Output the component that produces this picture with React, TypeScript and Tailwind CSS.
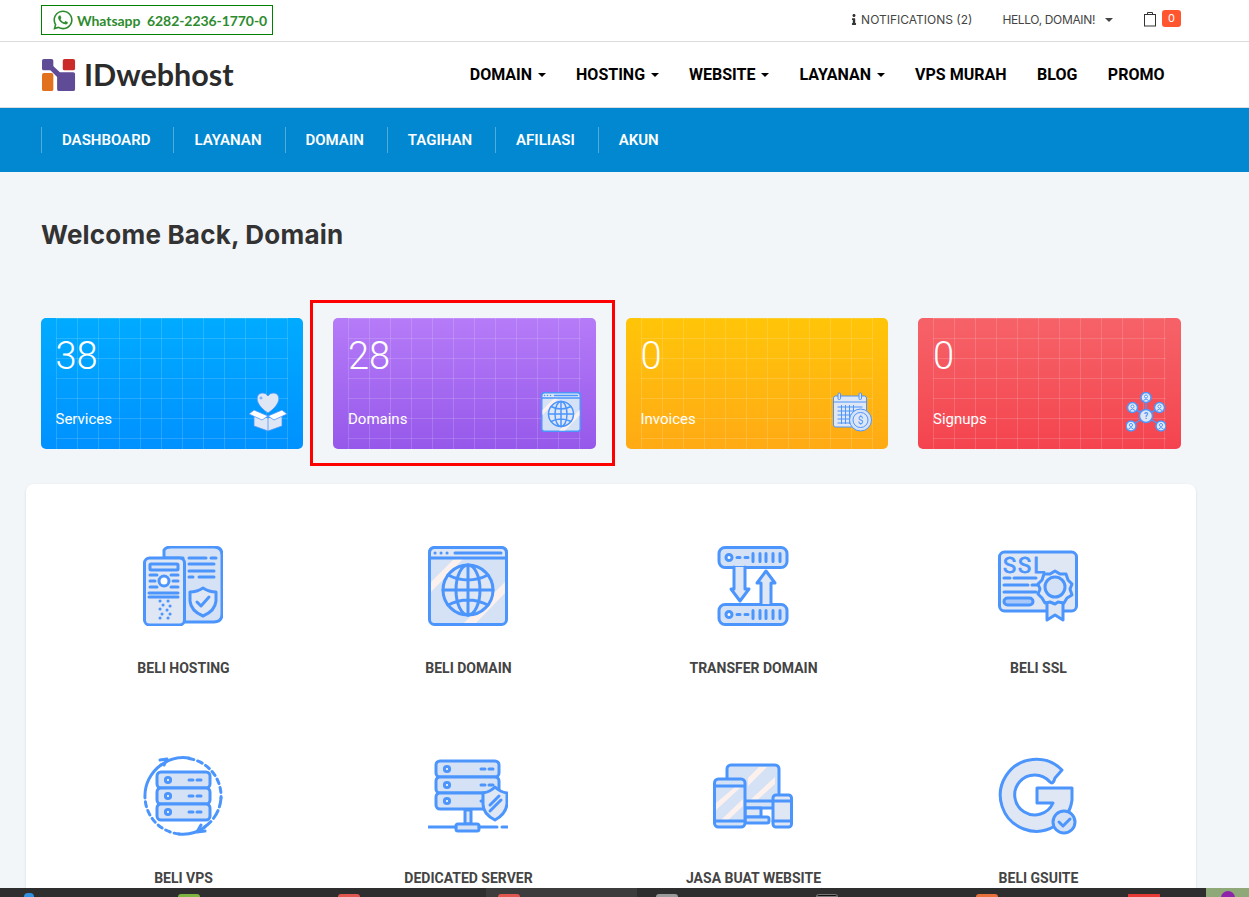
import { FaWhatsapp, FaInfo } from 'react-icons/fa';

const B = '#4b95fd';
const L1 = '#d5e2f5';
const L2 = '#e0e7f4';
const P = '#fdf1ee';

function Caret({ nav }: { nav?: boolean }) {
  return (
    <span
      className={`inline-block w-0 h-0 border-x-4 border-t-4 border-x-transparent border-t-current align-middle ${nav ? 'ml-[5.5px]' : 'ml-[10px]'}`}
    />
  );
}

function Ic({ children, className }: { children: React.ReactNode; className?: string }) {
  return (
    <svg viewBox="0 0 80 80" className={className} fill="none" stroke={B} strokeWidth="3" strokeLinecap="round" strokeLinejoin="round">
      {children}
    </svg>
  );
}

function HostingIcon({ className }: { className?: string }) {
  return (
    <Ic className={className}>
      <path d="M21 4 Q23 1 28 1 H71 Q79 1 79 9 V68 Q79 76 71 76 H40 V12 H21 Z" fill={L1} />
      <rect x="1.5" y="12" width="40" height="67" rx="5" fill={L2} />
      <rect x="7" y="18" width="28" height="6" rx="1" fill={L1} />
      <circle cx="21" cy="35" r="5" fill="#fff" />
      <path d="M7 29h7M28 29h7M7 35h5M30 35h5M7 41h7M28 41h7M6 47h29M6 51h29" />
      <path d="M46 12h17M68 12h5M46 18h25M46 25h25M46 31h4M56 31h15" />
      <path d="M60 42 Q66 46 73 46 V55 Q72 65 60 70 Q48 65 47 55 V46 Q54 46 60 42Z" fill={L2} />
      <path d="M54 56l4 4 8-9" />
      <path d="M17 55h.1M25 55h.1M20 59h.1M27 60h.1M17 63h.1M24 64h.1M19 68h.1M27 68h.1M17 72h.1M25 72h.1" />
    </Ic>
  );
}

function GlobeIcon({ className }: { className?: string }) {
  return (
    <Ic className={className}>
      <rect x="1.5" y="1.5" width="77" height="77" rx="5" fill={L1} />
      <path d="M3 36 L27 12 H36 L3 46Z M36 77 L77 36 V47 L48 77Z" fill={P} stroke="none" />
      <path d="M1.5 12 V7 Q1.5 1.5 7 1.5 H73 Q78.5 1.5 78.5 7 V12Z" fill={L2} />
      <path d="M7 7h.1M13 7h.1M19 7h.1M27 7h46" />
      <circle cx="40" cy="44" r="25" fill={L2} />
      <ellipse cx="40" cy="44" rx="12" ry="25" />
      <path d="M40 19v50M15 44h50M20 29 Q40 39 60 29M20 59 Q40 49 60 59" />
    </Ic>
  );
}

function TransferIcon({ className }: { className?: string }) {
  const server = (y: number) => (
    <g>
      <rect x="6" y={y} width="68" height="20" rx="6" fill={L1} />
      <circle cx="16" cy={y + 10} r="3" fill="#fff" />
      <path d={`M24 ${y + 10}h3M32 ${y + 10}h3M40 ${y + 6}v8M47 ${y + 6}v8M53 ${y + 6}v8M60 ${y + 6}v8M67 ${y + 6}v8`} />
    </g>
  );
  return (
    <Ic className={className}>
      {server(1.5)}
      {server(58.5)}
      <path d="M21 21 V43 H18 L27 55 L36 43 H32 V21" fill={L2} />
      <path d="M48 58 V37 H44 L53 25 L62 37 H58 V58" fill={L2} />
    </Ic>
  );
}

function SslIcon({ className }: { className?: string }) {
  return (
    <Ic className={className}>
      <rect x="1.5" y="6" width="77" height="59" rx="5" fill={L2} />
      <text x="5" y="27" fontSize="22" fontFamily="Roboto, sans-serif" fill={B} stroke={B} strokeWidth="0.8" letterSpacing="2">SSL</text>
      <path d="M6 32h6M16 32h22M6 39h24M34 39h5M6 46h32" />
      <rect x="6" y="52" width="29" height="7" rx="3.5" fill="#a9c8f8" />
      <path d="M49 55 V74 L57 69 L65 74 V55" fill={L2} />
      <path d="M57 25 L62 28 L68 28 L70 34 L74 38 L72 43 L74 49 L69 52 L66 57 L60 56 L57 58 L52 56 L47 57 L44 52 L40 48 L42 43 L40 38 L44 34 L46 28 L52 28Z" fill={L2} />
      <circle cx="57" cy="41" r="10" fill={L1} />
    </Ic>
  );
}

function VpsIcon({ className }: { className?: string }) {
  return (
    <Ic className={className}>
      <path d="M18 9 A38 38 0 0 1 46 2" />
      <path d="M46 2.5 A38 38 0 0 1 78 42" strokeDasharray="5 4" />
      <path d="M78 42 A38 38 0 0 1 60 72" strokeDasharray="9 4" />
      <path d="M62 71 A38 38 0 0 1 36 78" />
      <path d="M36 78 A38 38 0 0 1 2 42" strokeDasharray="5 4" />
      <path d="M2 42 A38 38 0 0 1 18 9" />
      <path d="M17 4 L24 3 L21 9M62 75 L54 76 L58 69" />
      {[16, 32, 48].map((y) => (
        <g key={y}>
          <rect x="14" y={y} width="53" height="16" rx="4" fill={L1} />
          <circle cx="25" cy={y + 8} r="2.6" fill="#fff" />
          <path d={`M46 ${y + 8}h4M54 ${y + 8}h4`} />
        </g>
      ))}
    </Ic>
  );
}

function DedicatedIcon({ className }: { className?: string }) {
  return (
    <Ic className={className}>
      {[5, 21, 37].map((y) => (
        <g key={y}>
          <rect x="8" y={y} width="63" height="16" rx="4" fill={L1} />
          <circle cx="19" cy={y + 8} r="2.6" fill="#fff" />
          <path d={`M53 ${y + 8}h4M61 ${y + 8}h4`} />
        </g>
      ))}
      <rect x="37" y="54" width="6" height="14" fill={L2} />
      <rect x="28" y="68" width="23" height="7" rx="2" fill={L1} />
      <path d="M1 71h27M51 71h18M74 71h5" />
      <path d="M67 31 Q72 36 79 37 V48 Q78 58 67 64 Q55 58 55 48 V37 Q62 36 67 31Z" fill={L2} />
      <path d="M62 49l9-9M62 55l11-11" />
    </Ic>
  );
}

function WebsiteIcon({ className }: { className?: string }) {
  return (
    <Ic className={className}>
      <rect x="14" y="9" width="52" height="43" rx="4" fill={L1} />
      <path d="M35 22 L46 11 H54 L35 30Z M35 46 L62 21 V28 L42 46Z" fill={P} stroke="none" />
      <path d="M32 45h34" />
      <rect x="32" y="52" width="16" height="9" fill={L2} />
      <rect x="32" y="61" width="24" height="6" rx="2" fill={L1} />
      <rect x="1.5" y="23" width="30.5" height="48" rx="4" fill={L1} />
      <path d="M3 47 L22 31 H28 L3 54Z M8 64 L30 43 V50 L15 64Z" fill={P} stroke="none" />
      <path d="M1.5 30h30M1.5 65h30" />
      <rect x="60" y="39" width="18.5" height="32" rx="3" fill={L2} />
      <path d="M60 45h18M60 65h18" />
    </Ic>
  );
}

function GsuiteIcon({ className }: { className?: string }) {
  return (
    <Ic className={className}>
      <path d="M64 14 A36 36 0 1 0 74 44 V32 H39 V47 H55 A20 20 0 1 1 52 26 Q55 29 57 22 Z" fill={L2} />
      <circle cx="66" cy="66" r="11" fill={L1} />
      <path d="M61 66l4 4 7-7" />
    </Ic>
  );
}

function BoxIcon({ className }: { className?: string }) {
  return (
    <svg viewBox="0 0 80 80" className={className} fill={L2} stroke={B} strokeWidth="1.6" strokeLinejoin="round">
      <path d="M40 42 C12 24 14 2 30 2 Q36 2 40 8 Q44 2 50 2 C66 2 68 24 40 42Z" />
      <path d="M12 42 V68 L40 78 L68 68 V42 L40 52Z" />
      <path d="M40 52 V78" />
      <path d="M12 36 L2 44 L28 56 L40 48 L52 56 L78 44 L68 36 L40 48Z" fill="#fff" />
      <circle cx="26" cy="12" r="2" fill={L1} />
    </svg>
  );
}

function CalendarIcon({ className }: { className?: string }) {
  return (
    <svg viewBox="0 0 80 80" className={className} fill={L2} stroke={B} strokeWidth="2">
      <rect x="1" y="8" width="66" height="62" rx="4" />
      <rect x="10" y="2" width="5" height="13" rx="2" fill={L1} />
      <rect x="52" y="2" width="5" height="13" rx="2" fill={L1} />
      <path d="M1 20h66M9 30h50M9 38h38M9 46h30M9 54h28M9 62h28M17 26v38M25 26v38M33 26v38M41 26v14" />
      <circle cx="55" cy="56" r="22" fill={L1} />
      <circle cx="55" cy="56" r="15" fill={L2} />
      <text x="55" y="63" fontSize="20" fontFamily="Roboto, sans-serif" textAnchor="middle" fill={B} stroke="none">$</text>
    </svg>
  );
}

function NetworkIcon({ className }: { className?: string }) {
  const nodes = [[40, 11], [13, 31], [67, 31], [10, 68], [70, 68]];
  return (
    <svg viewBox="0 0 80 80" className={className} fill={L2} stroke={B} strokeWidth="3">
      {nodes.map(([x, y]) => (
        <line key={`${x}-${y}`} x1="40" y1="48" x2={x} y2={y} />
      ))}
      {nodes.map(([x, y]) => (
        <g key={`n${x}-${y}`}>
          <circle cx={x} cy={y} r="10" />
          <circle cx={x} cy={y - 2} r="3" fill="#fff" strokeWidth="2" />
          <path d={`M${x - 5} ${y + 6} Q${x} ${y} ${x + 5} ${y + 6}`} strokeWidth="2" fill="none" />
        </g>
      ))}
      <circle cx="40" cy="48" r="13" />
      <text x="40" y="54" fontSize="17" fontFamily="Roboto, sans-serif" fontWeight="700" textAnchor="middle" fill={B} stroke="none">?</text>
    </svg>
  );
}

const mainNav = [
  { label: 'DOMAIN', caret: true },
  { label: 'HOSTING', caret: true },
  { label: 'WEBSITE', caret: true },
  { label: 'LAYANAN', caret: true },
  { label: 'VPS MURAH' },
  { label: 'BLOG' },
  { label: 'PROMO' },
];

const subNav = ['DASHBOARD', 'LAYANAN', 'DOMAIN', 'TAGIHAN', 'AFILIASI', 'AKUN'];

const cards = [
  { n: '38', label: 'Services', bg: 'bg-gradient-to-b from-[#00abff] to-[#0091ff]', Icon: BoxIcon },
  { n: '28', label: 'Domains', bg: 'bg-gradient-to-b from-[#b57bf8] to-[#9658ea]', Icon: GlobeIcon },
  { n: '0', label: 'Invoices', bg: 'bg-gradient-to-b from-[#ffc508] to-[#ffaa14]', Icon: CalendarIcon },
  { n: '0', label: 'Signups', bg: 'bg-gradient-to-b from-[#f66268] to-[#f4434f]', Icon: NetworkIcon },
];

const products = [
  { label: 'BELI HOSTING', Icon: HostingIcon },
  { label: 'BELI DOMAIN', Icon: GlobeIcon },
  { label: 'TRANSFER DOMAIN', Icon: TransferIcon },
  { label: 'BELI SSL', Icon: SslIcon },
  { label: 'BELI VPS', Icon: VpsIcon },
  { label: 'DEDICATED SERVER', Icon: DedicatedIcon },
  { label: 'JASA BUAT WEBSITE', Icon: WebsiteIcon },
  { label: 'BELI GSUITE', Icon: GsuiteIcon },
];

export default function App() {
  return (
    <div className="relative h-[897px] overflow-hidden bg-[#f3f6f9] font-['Roboto',sans-serif]">
      {/* Top bar */}
      <div className="h-[42px] bg-white border-b border-[#dcdcdc] flex items-center justify-between pl-[41px] pr-[68px]">
        <div className="flex items-center h-[30px] mb-[1px] w-[232px] border border-[#008000] pl-[10px] font-['Lato',sans-serif] font-bold text-[14px] tracking-[-0.07px] text-[#2e8b2e] whitespace-pre">
          <FaWhatsapp className="w-[22px] h-[22px] mr-[3px]" />
          <span>Whatsapp  6282-2236-1770-0</span>
        </div>
        <div className="flex items-center mb-[2px] text-[12px] text-[#444] font-['Inter',sans-serif]">
          <FaInfo className="w-[8px] h-[11px] text-[#333] mr-[3px]" />
          <span>NOTIFICATIONS (2)</span>
          <span className="ml-[30px] tracking-[-0.35px]">HELLO, DOMAIN!</span>
          <Caret />
          <svg viewBox="0 0 14 16" className="w-[14px] h-[16px] ml-[30px] mb-[2px]" fill="none" stroke="#333" strokeWidth="1">
            <rect x="1.5" y="3.5" width="11" height="11.5" />
            <path d="M4.5 3.5 V1.5 H9.5 V3.5" />
          </svg>
          <span className="ml-[5px] w-[19px] h-[17px] mb-[2px] rounded-[3px] bg-[#ff5630] text-white text-[11px] flex items-center justify-center">0</span>
        </div>
      </div>

      {/* Logo and main nav */}
      <div className="h-[66px] bg-white border-b border-[#dcdcdc] flex items-center justify-between pl-[42px] pr-[84.5px]">
        <div className="flex items-center">
          <svg viewBox="0 0 36 34" className="w-[34px] h-[34px]">
            <rect x="0" y="0" width="12" height="12" rx="2" fill="#5f4b96" />
            <rect x="22" y="0" width="13" height="12" rx="2" fill="#cb2a2a" />
            <rect x="0" y="15" width="12" height="19" rx="2" fill="#e2711d" />
            <path d="M8 4 L19 14 H33 Q35 14 35 16 V32 Q35 34 33 34 H18 Q16 34 16 32 V19 L6 9Z" fill="#5f4b96" />
          </svg>
          <span className="ml-[8px] font-['Lato',sans-serif] font-bold text-[30.5px] leading-none text-[#2b2b2b]">IDwebhost</span>
        </div>
        <nav className="flex items-center gap-[30.5px] text-[16px] font-bold text-black">
          {mainNav.map((item) => (
            <span key={item.label} className="flex items-center">
              {item.label}
              {item.caret && <Caret nav />}
            </span>
          ))}
        </nav>
      </div>

      {/* Client area nav */}
      <div className="h-[64px] bg-[#0288d1] flex items-center pl-[41px]">
        {subNav.map((item) => (
          <span key={item} className="h-[26px] pl-[20px] pr-[23px] border-l border-white/30 flex items-center text-white text-[15px] font-semibold">
            {item}
          </span>
        ))}
      </div>

      <h1 className="mt-[46px] ml-[41px] font-['Inter',sans-serif] font-bold text-[26px] leading-[34px] tracking-[0.2px] text-[#333]">Welcome Back, Domain</h1>

      {/* Stat cards */}
      <div className="ml-[40.5px] mt-[66px] w-[1140px] grid grid-cols-4 gap-[30px]">
        {cards.map(({ n, label, bg, Icon }) => (
          <div key={label} className={`relative h-[131px] rounded-[5px] overflow-hidden text-white px-[15px] ${bg}`}>
            <div className="absolute inset-y-0 inset-x-[15px] bg-[linear-gradient(to_right,rgba(255,255,255,0.15)_1px,transparent_1px),linear-gradient(to_bottom,rgba(255,255,255,0.15)_1px,transparent_1px)] bg-[size:21px_20px]" />
            <div className="relative flex items-end justify-between h-full pb-[17px]">
              <div className="flex flex-col self-stretch justify-between">
                <div className="mt-[16px] text-[38px] leading-[45px] font-light">{n}</div>
                <div className="mb-[2px] text-[15px] leading-[22px]">{label}</div>
              </div>
              <Icon className="w-[40px] h-[40px]" />
            </div>
          </div>
        ))}
      </div>

      {/* Products */}
      <div className="ml-[26px] mt-[35px] w-[1170px] bg-white rounded-[8px] px-[15px] pt-[62px] shadow-sm">
        <div className="grid grid-cols-4 gap-y-[50px]">
          {products.map(({ label, Icon }) => (
            <div key={label} className="flex flex-col items-center h-[160px]">
              <Icon className="w-[80px] h-[80px] mr-[1px]" />
              <div className="mt-[32px] text-[14px] leading-[20px] font-bold text-[#444]">{label}</div>
            </div>
          ))}
        </div>
      </div>

      {/* Desktop taskbar at the bottom of the capture */}
      <div className="absolute inset-x-0 bottom-0 h-[9px] bg-[#2e2e2e] flex items-start overflow-hidden">
        <span className="ml-[24px] mt-[5px] w-[10px] h-[4px] rounded-t bg-[#2f8fe0]" />
        <span className="ml-[144px] mt-[6px] w-[22px] h-[3px] rounded-t bg-[#7cb342]" />
        <span className="ml-[138px] mt-[6px] w-[22px] h-[3px] rounded-t bg-[#e0574f]" />
        <span className="ml-[126px] h-[9px] w-[152px] bg-[#3c3c3c] pl-[12px] pt-[6px]">
          <span className="block w-[22px] h-[3px] rounded-t bg-[#e0574f]" />
        </span>
        <span className="ml-[19px] mt-[6px] w-[22px] h-[3px] rounded-t bg-[#9a9a9a]" />
        <span className="ml-[138px] mt-[6px] w-[22px] h-[3px] rounded-t border border-[#777] bg-[#111]" />
        <span className="ml-[138px] mt-[6px] w-[22px] h-[3px] rounded-t bg-[#e8703a]" />
        <span className="ml-[130px] mt-[6px] w-[32px] h-[3px] bg-[#e53935]" />
        <span className="ml-[46px] h-[9px] w-[43px] bg-[#8fa878] flex justify-center pt-[3px]">
          <span className="block w-[14px] h-[14px] rounded-full bg-[#8e24aa]" />
        </span>
      </div>

      {/* Highlight drawn over the screenshot */}
      <div className="absolute left-[310px] top-[300px] w-[305px] h-[166px] border-[3px] border-[#f00]" />
    </div>
  );
}
